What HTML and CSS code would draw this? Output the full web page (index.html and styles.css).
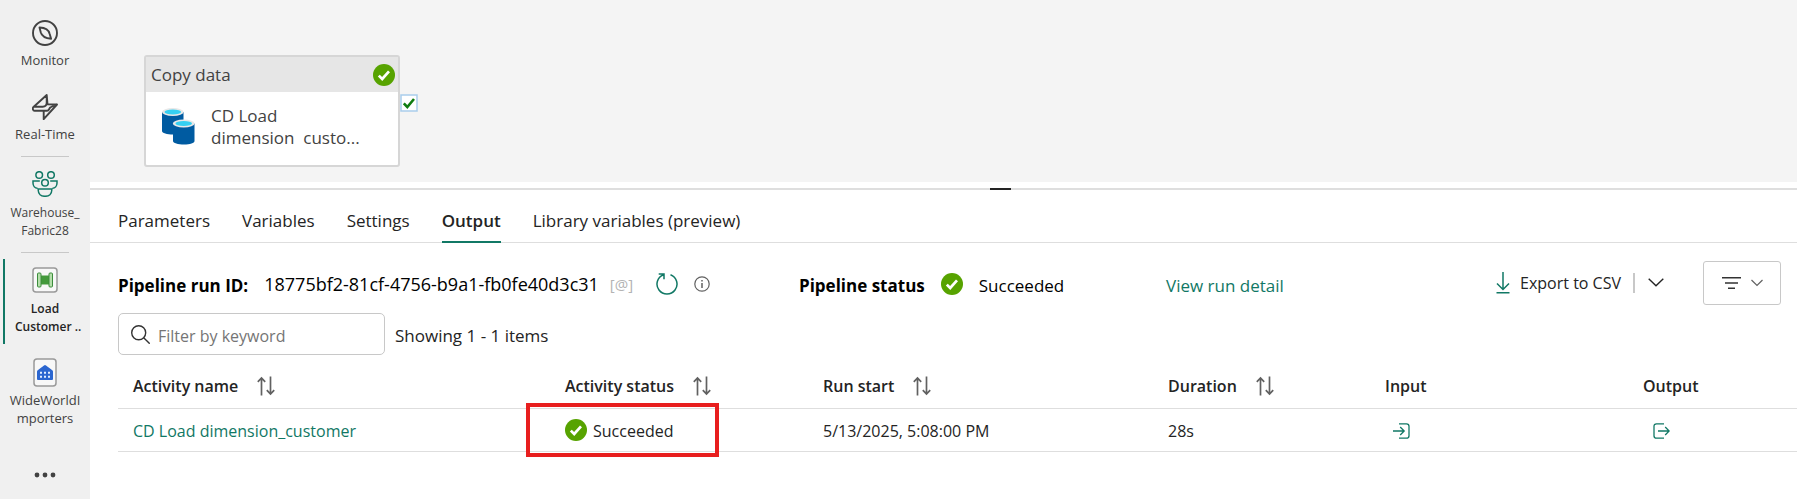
FILE: index.html
```html
<!DOCTYPE html>
<html lang="en">
<head>
<meta charset="utf-8">
<title>Load Customer pipeline</title>
<link rel="stylesheet" href="styles.css">
</head>
<body>
<svg class="defs" aria-hidden="true">
  <symbol id="ok" viewBox="0 0 22 22"><circle cx="11" cy="11" r="11" fill="#57a300"/><path d="M5.800 11.600 9.200 15 16 7.400" fill="none" stroke="#fff" stroke-width="2.700"/></symbol>
  <symbol id="sort" viewBox="0 0 18 20"><path d="M4.500 19.500V2M.8 5.800 4.500 2 8.200 5.800M13.500.5V18M9.800 14.200 13.500 18l3.700-3.800" fill="none" stroke="#616161" stroke-width="1.700"/></symbol>
</svg>
<div class="app">
  <nav class="rail">
    <a class="rail-item" href="#">
      <svg class="rail-icon" viewBox="0 0 26 26" fill="none" stroke="#424242" stroke-width="1.900" stroke-linejoin="round"><circle cx="13" cy="13" r="12"/><path d="M7.500 7.500c5 .2 9.300 2.500 10.200 6.500l1.400 4.800c-5-.4-9.200-2.300-10.300-6.200z"/></svg>
      <span>Monitor</span>
    </a>
    <a class="rail-item" href="#">
      <svg class="rail-icon" viewBox="0 0 26 26" fill="none" stroke="#424242" stroke-width="1.900" stroke-linejoin="round"><path d="M14.700 1 1.200 13.300c-.8 1-.3 3.500 1.300 3.500h9.200v8.400L25 10.500l-9.500-.2zM14.700 1v7.600c0 2.500-1.400 4.200-4 4.200H1.500M11.700 16.800H15c2 0 2-2 3.200-3.300L25 10"/></svg>
      <span>Real-Time</span>
    </a>
    <hr>
    <a class="rail-item workspace" href="#">
      <svg class="rail-icon" viewBox="0 0 26 26" fill="none" stroke="#117865" stroke-width="1.500"><circle cx="7.200" cy="4" r="3.300"/><circle cx="19" cy="4" r="3.300"/><circle cx="13" cy="11.700" r="3.300"/><path d="M7.800 10H1v2c0 3 2 5.200 4.500 5.200M18.200 10H25v2c0 3-2 5.200-4.500 5.200M6.200 18h13.600v1c0 3.800-2.800 6.300-6.800 6.300S6.200 22.800 6.200 19z"/></svg>
      <span>Warehouse_<br>Fabric28</span>
    </a>
    <hr>
    <a class="rail-item active" href="#" aria-current="page">
      <svg class="rail-icon" viewBox="0 0 26 26"><rect x="1" y="1" width="24" height="24" rx="3" fill="#f8f8f8" stroke="#999" stroke-width="1.500"/><path d="M8 8.500h10v9H8z" fill="#449a3b"/><rect x="5.500" y="6" width="3.500" height="14" rx="1" fill="#b5dfab" stroke="#3c8c3d"/><rect x="17" y="6" width="3.500" height="14" rx="1" fill="#b5dfab" stroke="#3c8c3d"/></svg>
      <span>Load<br>&nbsp; Customer ..</span>
    </a>
    <a class="rail-item warehouse" href="#">
      <svg class="rail-icon" viewBox="0 0 24 29"><rect x="1" y="1" width="22" height="27" rx="3" fill="#f8f8f8" stroke="#999" stroke-width="1.500"/><path d="M4 13.500Q4 12.500 5 12l6-4.500q1-.8 2 0L19 12q1 .5 1 1.500V21q0 1-1 1H5q-1 0-1-1z" fill="#2b66d0"/><path d="M7 14.800h10M7 18.800h10" stroke="#e3eeff" stroke-width="2" stroke-dasharray="2 2"/></svg>
      <span>WideWorldI<br>mporters</span>
    </a>
    <button class="rail-more" aria-label="More"><svg viewBox="0 0 22 6" fill="#424242"><circle cx="3" cy="3" r="2.400"/><circle cx="11" cy="3" r="2.400"/><circle cx="19" cy="3" r="2.400"/></svg></button>
  </nav>
  <main class="main">
    <section class="canvas">
      <div class="activity">
        <div class="activity-head"><span>Copy data</span><svg class="ok"><use href="#ok"/></svg></div>
        <div class="activity-body">
          <svg class="copy-icon" viewBox="0 0 33 37"><path d="M0 4v19c0 2 5 3.500 11 3.500S21.500 25 21.500 23V4z" fill="#005ba1"/><ellipse cx="10.800" cy="4" rx="10.800" ry="4" fill="#e8e8e8"/><ellipse cx="10.800" cy="4" rx="8.300" ry="2.500" fill="#35d0f2"/><path d="M11 15.500V33c0 2 5 3.500 11 3.500S32.500 35 32.500 33V15.500z" fill="#005ba1"/><ellipse cx="21.700" cy="15.500" rx="10.900" ry="4" fill="#e8e8e8"/><ellipse cx="21.700" cy="15.500" rx="8.300" ry="2.500" fill="#35d0f2"/></svg>
          <span>CD Load<br>dimension&nbsp; custo...</span>
        </div>
        <svg class="port" viewBox="0 0 18 18"><rect x="1" y="1" width="16" height="16" fill="#fff" stroke="#a9cdeb" stroke-width="1.500"/><path d="M3.800 9.300 7.300 13 14 5" fill="none" stroke="#107c10" stroke-width="2.600"/></svg>
      </div>
    </section>
    <div class="splitter"><i></i></div>
    <div class="tabs" role="tablist">
      <button role="tab">Parameters</button>
      <button role="tab">Variables</button>
      <button role="tab">Settings</button>
      <button role="tab" class="selected" aria-selected="true">Output</button>
      <button role="tab">Library variables (preview)</button>
    </div>
    <section class="output">
      <div class="run">
        <div class="run-id">
          <b>Pipeline run ID:</b><span class="guid">18775bf2-81cf-4756-b9a1-fb0fe40d3c31</span>
          <span class="param">[@]</span>
          <button class="plain refresh" aria-label="Refresh"><svg viewBox="0 0 22 22" fill="none" stroke="#117865" stroke-width="1.500"><path d="M14.500 1.700A10 10 0 1 1 7.500 1.700M2.700 1H8v5.200"/></svg></button>
          <button class="plain info" aria-label="Information"><svg viewBox="0 0 16 16" fill="none" stroke="#616161" stroke-width="1.200"><circle cx="8" cy="8" r="7.200"/><path d="M8 7v5M8 4v1.600" stroke-width="1.500"/></svg></button>
        </div>
        <div class="run-status"><b>Pipeline status</b><svg class="ok"><use href="#ok"/></svg><span class="low">Succeeded</span></div>
        <a class="detail" href="#">View run detail</a>
        <div class="actions">
          <button class="plain export"><svg viewBox="0 0 14 22" fill="none" stroke="#117865" stroke-width="1.500"><path d="M7 0v17M1 11.500l6 6 6-6M.5 20.700h13"/></svg>Export to CSV</button>
          <i class="divider"></i>
          <button class="plain chevron" aria-label="Export options"><svg viewBox="0 0 16 9" fill="none" stroke="#242424" stroke-width="1.400"><path d="m.7.700 7.300 7 7.300-7"/></svg></button>
          <button class="filter" aria-label="Filter"><svg width="19" height="14" viewBox="0 0 19 14" fill="none" stroke="#333" stroke-width="1.500"><path d="M0 1.700h19M3 7h13M6 12.300h7"/></svg><svg width="12" height="8" viewBox="0 0 12 8" fill="none" stroke="#616161" stroke-width="1.200"><path d="m.5 1 5.500 5.500L11.500 1"/></svg></button>
        </div>
      </div>
      <div class="search-row">
        <label class="search"><svg viewBox="0 0 19 19" fill="none" stroke="#333" stroke-width="1.400"><circle cx="7.700" cy="7.700" r="7"/><path d="m12.700 12.700 6 6"/></svg><input type="text" placeholder="Filter by keyword" aria-label="Filter by keyword"></label>
        <span class="low">Showing 1 - 1 items</span>
      </div>
      <table>
        <colgroup><col class="c-name"><col class="c-status"><col class="c-start"><col class="c-duration"><col class="c-input"><col></colgroup>
        <thead><tr>
          <th><span>Activity name<svg><use href="#sort"/></svg></span></th>
          <th><span>Activity status<svg><use href="#sort"/></svg></span></th>
          <th><span>Run start<svg><use href="#sort"/></svg></span></th>
          <th><span>Duration<svg><use href="#sort"/></svg></span></th>
          <th>Input</th><th>Output</th>
        </tr></thead>
        <tbody><tr>
          <td><a href="#">CD Load dimension_customer</a></td>
          <td class="marked"><span class="state"><svg class="ok"><use href="#ok"/></svg><span>Succeeded</span></span><i class="mark"></i></td>
          <td>5/13/2025, 5:08:00 PM</td>
          <td>28s</td>
          <td><button class="plain io" aria-label="Input"><svg viewBox="0 0 17 16" fill="none" stroke="#117865" stroke-width="1.300"><path d="M6 .8h7.500q2.500 0 2.500 2.500v9.400q0 2.500-2.500 2.500H6M0 8h11M7.200 4 11.200 8l-4 4"/></svg></button></td>
          <td><button class="plain io out" aria-label="Output"><svg viewBox="0 0 17 16" fill="none" stroke="#117865" stroke-width="1.300"><path d="M11 .8H3.500Q1 .8 1 3.300v9.400q0 2.500 2.500 2.500H11M5 8h11M12.200 4l4 4-4 4"/></svg></button></td>
        </tr></tbody>
      </table>
    </section>
  </main>
</div>
</body>
</html>
```
FILE: styles.css
```css
* { box-sizing: border-box; }
body { margin: 0; background: #fff; color: #242424; font: 17px/24px "Open Sans", "Noto Sans", sans-serif; }
a { color: #117865; text-decoration: none; }
button { font: inherit; color: inherit; background: none; border: 0; padding: 0; }
svg { display: block; flex: none; }
.defs { position: absolute; width: 0; height: 0; }
.app { display: flex; min-height: 100vh; }
.ok { width: 22px; height: 22px; }
.low { padding-top: 4px; }

.rail { flex: none; width: 90px; background: #f0f0f0; padding-top: 20px; display: flex; flex-direction: column; align-items: center; }
.rail-item { width: 100%; display: flex; flex-direction: column; align-items: center; gap: 5px; color: #424242; font-size: 13px; line-height: 18px; text-align: center; margin-bottom: 25px; white-space: nowrap; }
.rail-icon { width: 26px; height: 26px; }
.rail hr { width: 48px; height: 1px; margin: 0; border: 0; background: #c8c8c8; }
.rail-item + hr { margin-top: -12px; }
.rail hr + .rail-item { margin-top: 14px; }
.workspace { gap: 7px; margin-bottom: 24px; font-size: 12px; }
.rail hr + .active { margin-top: 6px; }
.active { position: relative; gap: 7px; padding: 8px 0; margin-bottom: 14px; color: #242424; font-size: 12px; font-weight: 600; }
.active::before { content: ""; position: absolute; left: 3px; top: 0; bottom: 0; width: 2px; background: #117865; }
.warehouse { gap: 4px; margin-bottom: 45px; }
.warehouse .rail-icon { width: 24px; height: 29px; }
.rail-more svg { width: 22px; height: 6px; }

.main { flex: 1; min-width: 0; }
.canvas { background: #f4f4f4; padding: 55px 54px 15px; }
.activity { position: relative; width: 256px; border: 2px solid #d6d6d6; border-radius: 3px; background: #fff; color: #424242; }
.activity-head { display: flex; justify-content: space-between; align-items: center; height: 35px; padding: 0 3px 0 5px; background: #e6e6e6; }
.activity-body { display: flex; align-items: center; gap: 16px; height: 73px; padding: 0 16px 4px; line-height: 22px; white-space: nowrap; }
.copy-icon { width: 33px; height: 37px; }
.port { position: absolute; left: 254px; top: 37px; width: 18px; height: 18px; }
.splitter { height: 8px; border-bottom: 2px solid #dedede; position: relative; }
.splitter i { position: absolute; left: calc(50% + 46px); bottom: -2px; width: 21px; height: 2px; background: #242424; }

.tabs { display: flex; gap: 32px; height: 53px; padding: 10px 28px 0; border-bottom: 1px solid #dedede; }
.tabs button { height: 43px; border-bottom: 2px solid transparent; }
.tabs .selected { font-weight: 600; border-color: #117865; }

.output { padding-left: 28px; }
.run { display: flex; align-items: center; height: 70px; padding: 4px 16px 0 0; color: #000; }
.run-id, .run-status { display: flex; align-items: center; padding-top: 8px; }
.run b { padding-top: 4px; }
.detail { padding-top: 12px; }
.run-id { width: 681px; }
.run-status { width: 367px; gap: 16px; }
.guid { margin-left: 16px; font-size: 18px; }
.param { margin-left: 11px; color: #b3b3b3; font-size: 15px; }
.refresh { margin-left: 23px; }
.refresh svg { width: 22px; height: 22px; }
.info { margin-left: 16px; }
.info svg { width: 16px; height: 16px; }
.actions { margin-left: auto; padding-top: 5px; display: flex; align-items: center; color: #242424; }
.export { display: flex; align-items: center; gap: 10px; font-size: 16px; }
.export svg { width: 14px; height: 22px; }
.divider { width: 2px; height: 20px; margin: 0 13px 0 12px; background: #c8c8c8; }
.chevron svg { width: 16px; height: 9px; }
.filter { display: flex; align-items: center; justify-content: center; gap: 10px; width: 78px; height: 44px; margin-left: 39px; border: 1px solid #c8c8c8; border-radius: 3px; }

.search-row { display: flex; align-items: center; gap: 10px; }
.search { display: flex; align-items: center; gap: 8px; width: 267px; height: 42px; padding: 0 12px; border: 1px solid #c8c8c8; border-radius: 5px; }
.search svg { width: 19px; height: 19px; }
.search input { flex: 1; min-width: 0; border: 0; outline: 0; padding: 4px 0 0; font: inherit; font-size: 16px; color: inherit; background: none; }
.search input::placeholder { color: #757575; opacity: 1; }

table { width: 100%; border-collapse: collapse; table-layout: fixed; font-size: 16px; }
.c-name { width: 432px; }
.c-status { width: 258px; }
.c-start { width: 345px; }
.c-duration { width: 217px; }
.c-input { width: 258px; }
th, td { padding: 0 0 0 15px; text-align: left; border-bottom: 1px solid #dedede; white-space: nowrap; }
th { height: 53px; padding-top: 9px; font-weight: 600; }
td { height: 43px; padding-top: 2px; }
th span { display: flex; align-items: center; gap: 19px; }
th svg { width: 18px; height: 20px; }
.marked { position: relative; padding-top: 0; }
.mark { position: absolute; left: -24px; top: -6px; width: 193px; height: 54px; border: 4px solid #e81e1e; }
.state { display: flex; align-items: center; gap: 6px; }
.state span { padding-top: 3px; }
.io { display: block; margin-left: 8px; }
.io svg { width: 17px; height: 16px; }
.out { margin-left: 10px; }
```
